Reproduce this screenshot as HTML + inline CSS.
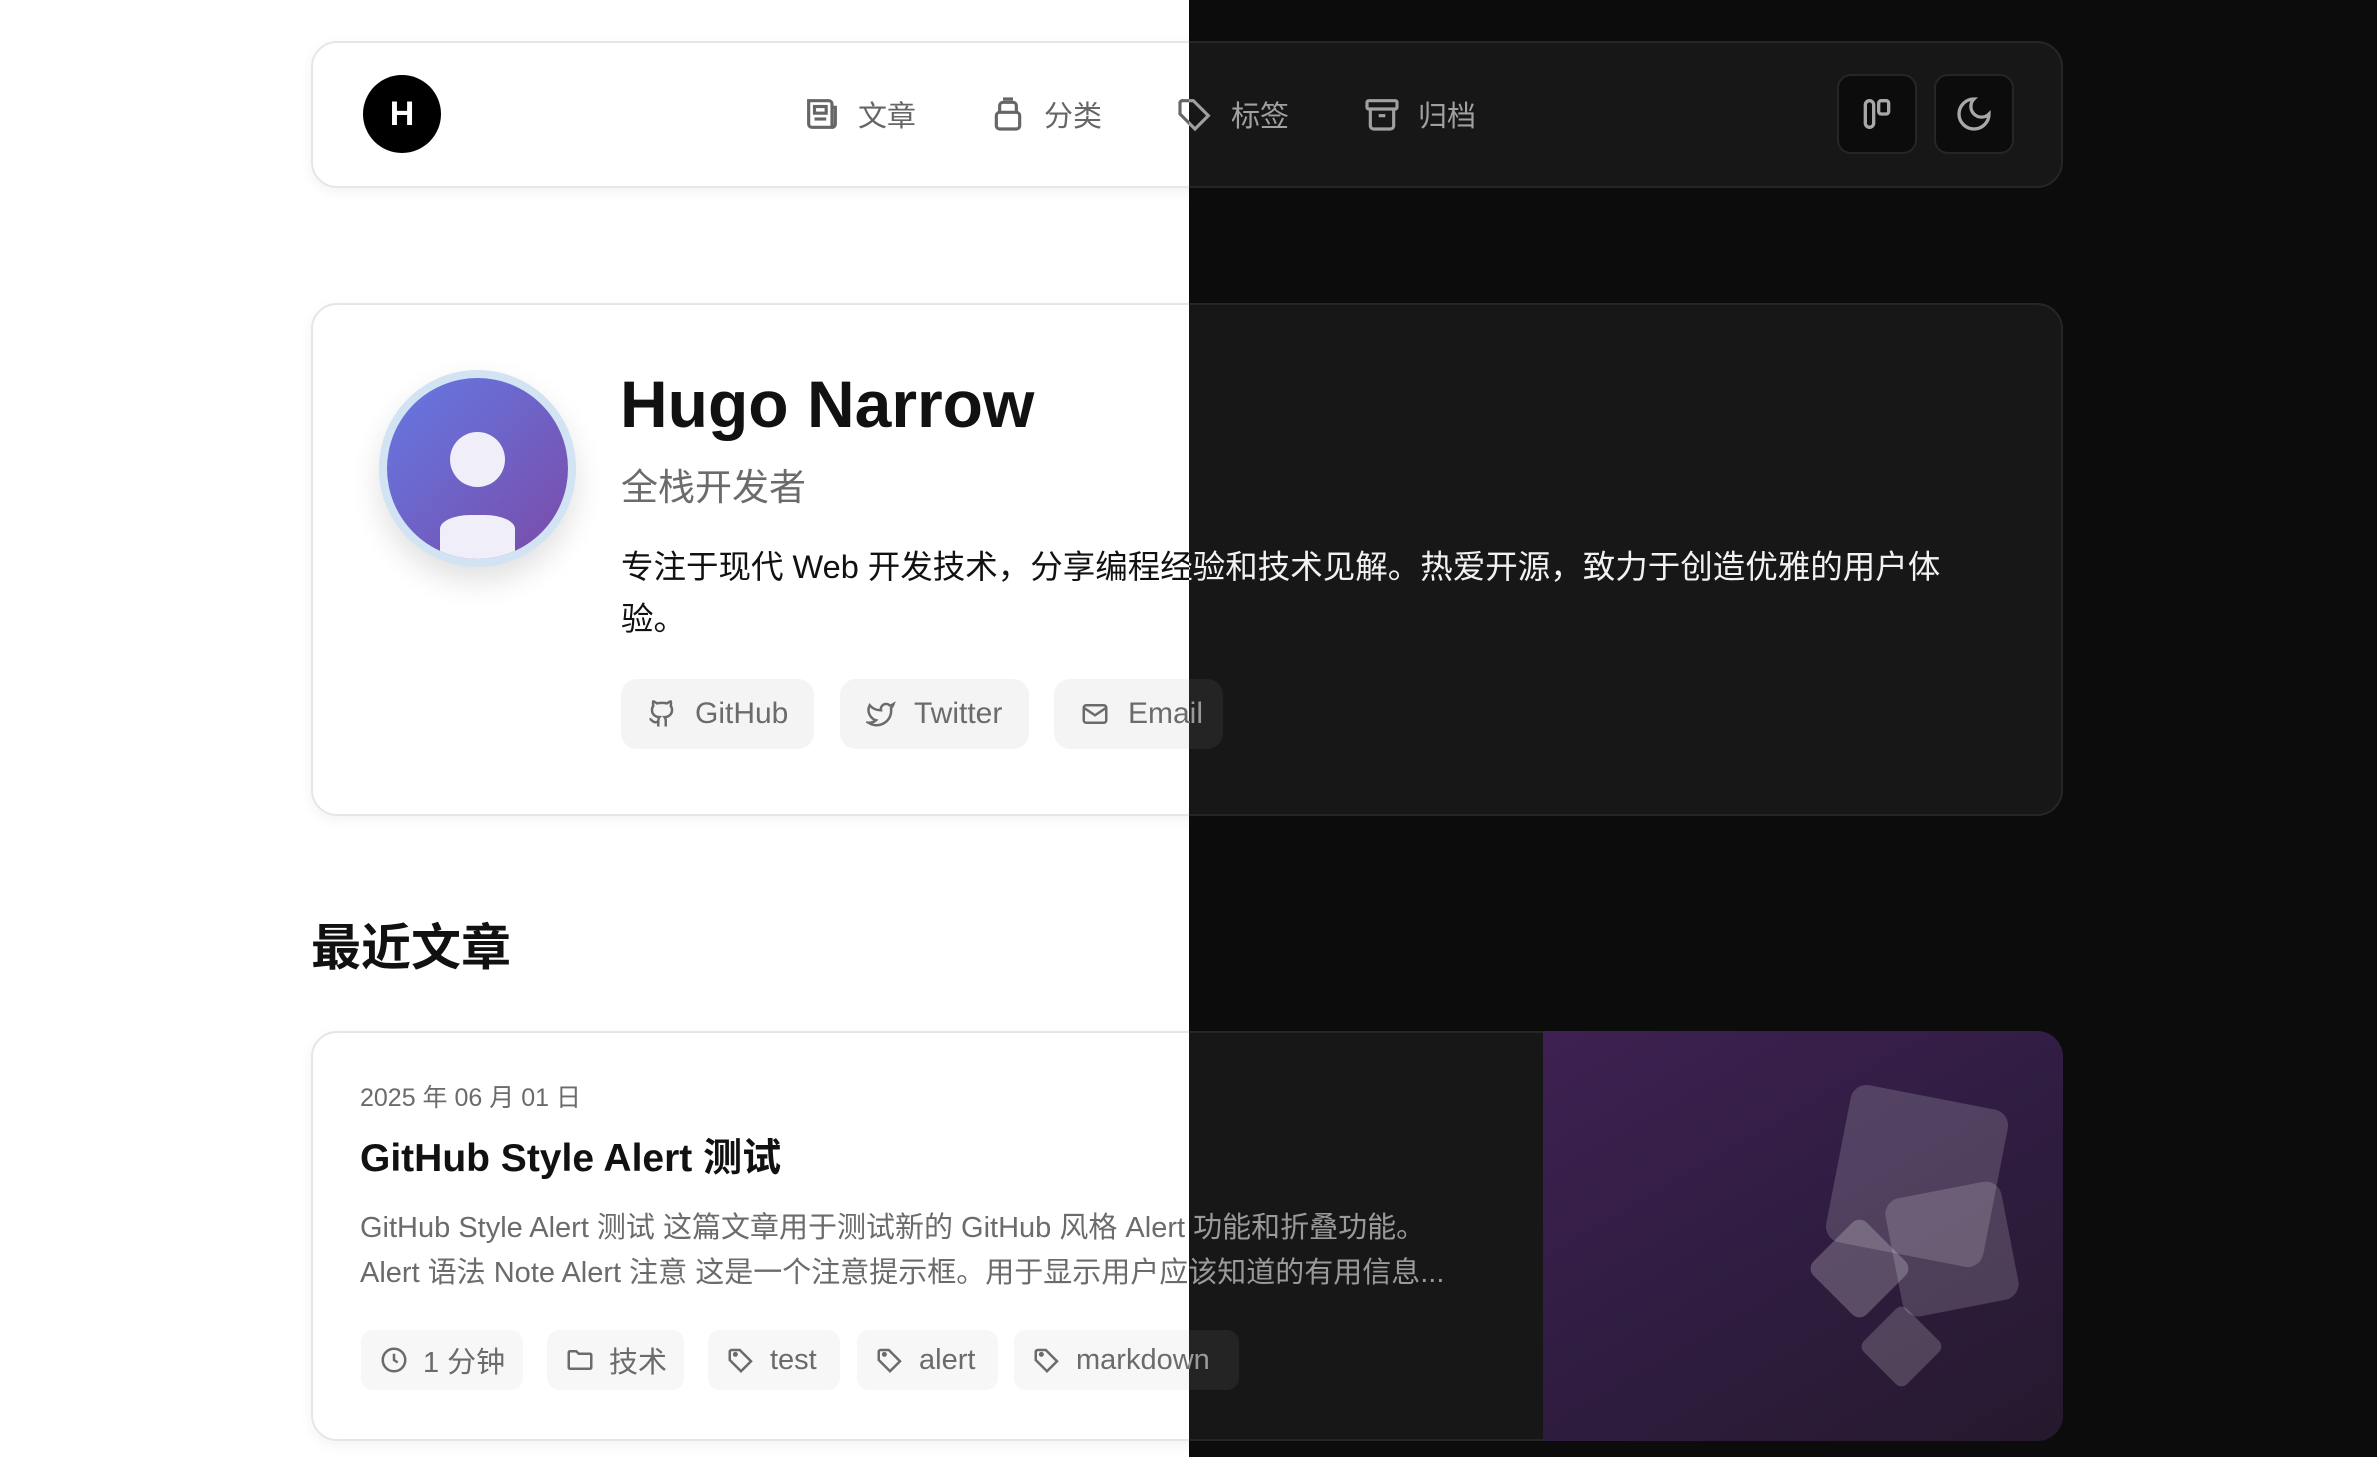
<!DOCTYPE html>
<html><head><meta charset="utf-8"><style>
*{margin:0;padding:0;box-sizing:border-box}
html,body{width:2377px;height:1457px;overflow:hidden;background:#fff}
body{font-family:"Liberation Sans","Noto Sans CJK SC",sans-serif;position:relative}
.layer{position:absolute;left:0;top:0;width:2377px;height:1457px;
 --bg:#fff;--card:#fff;--bd:#e6e6e6;--tx:#111;--mut:#6b6b6b;--chip:#f4f4f4;--nav:#666;--btn:#fff;--btnbd:#e6e6e6;--ic:#555;background:var(--bg)}
.dark{clip-path:inset(0 0 0 1189px);--bg:#0c0c0c;--card:#171717;--bd:#262626;--tx:#f2f2f2;--mut:#9a9a9a;--chip:#242424;--nav:#a0a0a0;--btn:#0c0c0c;--btnbd:#262626;--ic:#a8a8a8}
.card{position:absolute;left:311px;width:1752px;background:var(--card);border:2px solid var(--bd);border-radius:26px;overflow:hidden}
.light .card{box-shadow:0 4px 14px rgba(0,0,0,.05)}
.nav{top:41px;height:147px}
.logo{position:absolute;left:363px;top:75px;width:78px;height:78px;border-radius:50%;background:#000;color:#fff;font-weight:bold;font-size:34px;text-align:center;line-height:78px}
.ni{position:absolute;top:94px;height:40px;display:flex;align-items:center;font-size:29px;color:var(--nav)}
.ni svg{width:40px;height:40px;margin-right:16px;stroke:var(--nav);fill:none;stroke-width:1.9}
.tb{position:absolute;top:74px;width:80px;height:80px;border-radius:14px;background:var(--btn);border:2px solid var(--btnbd);display:flex;align-items:center;justify-content:center}
.tb svg{width:40px;height:40px;stroke:var(--ic);fill:none;stroke-width:2}
.prof{top:303px;height:513px}
.av{position:absolute;left:379px;top:370px;width:197px;height:197px;border-radius:50%;background:#d2e3f3;box-shadow:0 14px 30px rgba(0,0,0,.12);overflow:hidden}
.av .in{position:absolute;left:8px;top:8px;width:181px;height:181px;border-radius:50%;background:linear-gradient(135deg,#6479e4,#7a4ba8);overflow:hidden}
.name{position:absolute;left:620px;top:364px;font-size:66px;font-weight:bold;color:var(--tx);line-height:80px}
.sub{position:absolute;left:621px;top:463px;font-size:37px;color:var(--mut);line-height:50px}
.bio{position:absolute;left:621px;top:541px;font-size:32.5px;color:var(--tx);line-height:52px;width:1420px}
.sb{position:absolute;top:679px;height:70px;border-radius:16px;background:var(--chip);display:flex;align-items:center;padding-left:26px;font-size:30px;color:var(--mut)}
.sb svg{width:30px;height:30px;stroke:var(--mut);fill:none;stroke-width:2;margin-right:18px}
.h2{position:absolute;left:311px;top:918px;font-size:50px;font-weight:bold;color:var(--tx);line-height:60px}
.post{top:1031px;height:410px}
.date{position:absolute;left:360px;top:1078px;font-size:25px;color:var(--mut)}
.pt{position:absolute;left:360px;top:1135px;font-size:39px;font-weight:bold;color:var(--tx);line-height:48px}
.ex{position:absolute;left:360px;top:1206px;font-size:29px;color:var(--mut);line-height:45px;width:1150px}
.tg{position:absolute;top:1330px;height:60px;border-radius:12px;background:var(--chip);display:flex;align-items:center;padding-left:18px;font-size:29px;color:var(--mut)}
.light .tg{background:#f7f7f7}
.tg svg{width:30px;height:30px;stroke:var(--mut);fill:none;stroke-width:2;margin-right:14px}
.img{position:absolute;left:1543px;top:1031px;width:520px;height:410px;border-radius:0 26px 26px 0;background:linear-gradient(150deg,#3e2152 0%,#311d43 45%,#25192d 100%);overflow:hidden}
.sh{position:absolute;background:rgba(255,255,255,.16);border-radius:16px}
</style></head><body>
<div class="layer light">
 <div class="card nav"></div>
 <div class="logo">H</div>
 <div class="ni" style="left:802px"><svg viewBox="0 0 24 24"><path d="M4 4h12a2 2 0 0 1 2 2v14H6a2 2 0 0 1-2-2z"/><path d="M18 8h2v10a2 2 0 0 1-2 2"/><rect x="7.5" y="7.5" width="7" height="4"/><path d="M7.5 15h7"/></svg>文章</div>
 <div class="ni" style="left:988px"><svg viewBox="0 0 24 24"><rect x="5" y="11" width="14" height="10" rx="2"/><path d="M7 11V7a2 2 0 0 1 2-2h6a2 2 0 0 1 2 2v4"/><path d="M9 3h6"/></svg>分类</div>
 <div class="ni" style="left:1175px"><svg viewBox="0 0 24 24"><path d="M3 5v7l9 9 8-8-9-9H5a2 2 0 0 0-2 1z"/></svg>标签</div>
 <div class="ni" style="left:1362px"><svg viewBox="0 0 24 24"><rect x="3" y="4" width="18" height="5" rx="1"/><path d="M5 9v10a2 2 0 0 0 2 2h10a2 2 0 0 0 2-2V9"/><path d="M10 13h4"/></svg>归档</div>
 <div class="tb" style="left:1837px"><svg viewBox="0 0 24 24"><rect x="5" y="4" width="5" height="16" rx="2.5"/><rect x="13" y="4" width="6" height="8" rx="1.5"/></svg></div>
 <div class="tb" style="left:1934px"><svg viewBox="0 0 24 24"><path d="M12 3a6 6 0 0 0 9 9 9 9 0 1 1-9-9z"/></svg></div>

 <div class="card prof"></div>
 <div class="av"><div class="in"><div style="position:absolute;left:63px;top:54px;width:55px;height:55px;border-radius:50%;background:#f0eef8"></div><div style="position:absolute;left:53px;top:137px;width:75px;height:60px;border-radius:30px 30px 0 0/14px 14px 0 0;background:#f0eef8"></div></div></div>
 <div class="name">Hugo Narrow</div>
 <div class="sub">全栈开发者</div>
 <div class="bio">专注于现代 Web 开发技术，分享编程经验和技术见解。热爱开源，致力于创造优雅的用户体<br>验。</div>
 <div class="sb" style="left:621px;width:193px"><svg viewBox="0 0 24 24"><path d="M15 22v-4a4.8 4.8 0 0 0-1-3.5c3 0 6-2 6-5.5.1-1.3-.3-2.5-1-3.5.3-1.2.3-2.4 0-3.5 0 0-1 0-3 1.5-2.6-.5-5.4-.5-8 0C6 2 5 2 5 2c-.3 1.1-.3 2.3 0 3.5-.7 1-1.1 2.2-1 3.5 0 3.5 3 5.5 6 5.5-.4.5-.7 1.1-.8 1.7-.2.6-.2 1.2-.2 1.8v4"/><path d="M9 18c-4.5 2-5-2-7-2"/></svg>GitHub</div>
 <div class="sb" style="left:840px;width:189px"><svg viewBox="0 0 24 24"><path d="M22 4s-.7 2.1-2 3.4c1.6 10-9.4 17.3-18 11.6 2.2.1 4.4-.6 6-2C3 15.5.5 9.6 3 5c2.2 2.6 5.6 4.1 9 4-.9-4.2 4-6.6 7-3.8 1.1 0 3-1.200 3-1.2z"/></svg>Twitter</div>
 <div class="sb" style="left:1054px;width:169px"><svg viewBox="0 0 24 24"><rect x="3" y="5" width="18" height="14" rx="2"/><path d="M3 7l9 6 9-6"/></svg>Email</div>

 <div class="h2">最近文章</div>
 <div class="card post"></div>
 <div class="date">2025 年 06 月 01 日</div>
 <div class="pt">GitHub Style Alert 测试</div>
 <div class="ex">GitHub Style Alert 测试 这篇文章用于测试新的 GitHub 风格 Alert 功能和折叠功能。<br>Alert 语法 Note Alert 注意 这是一个注意提示框。用于显示用户应该知道的有用信息...</div>
 <div class="tg" style="left:361px;width:162px"><svg viewBox="0 0 24 24"><circle cx="12" cy="12" r="9"/><path d="M12 7v5l3 2"/></svg>1 分钟</div>
 <div class="tg" style="left:547px;width:137px"><svg viewBox="0 0 24 24"><path d="M3 6a1 1 0 0 1 1-1h5l2 2h9a1 1 0 0 1 1 1v10a1 1 0 0 1-1 1H4a1 1 0 0 1-1-1z"/></svg>技术</div>
 <div class="tg" style="left:708px;width:132px"><svg viewBox="0 0 24 24"><path d="M3 5v7l9 9 8-8-9-9H5a2 2 0 0 0-2 1z"/><circle cx="7.5" cy="7.5" r="1"/></svg>test</div>
 <div class="tg" style="left:857px;width:141px"><svg viewBox="0 0 24 24"><path d="M3 5v7l9 9 8-8-9-9H5a2 2 0 0 0-2 1z"/><circle cx="7.5" cy="7.5" r="1"/></svg>alert</div>
 <div class="tg" style="left:1014px;width:225px"><svg viewBox="0 0 24 24"><path d="M3 5v7l9 9 8-8-9-9H5a2 2 0 0 0-2 1z"/><circle cx="7.5" cy="7.5" r="1"/></svg>markdown</div>
</div>

<div class="layer dark">
 <div class="card nav"></div>
 <div class="ni" style="left:1175px"><svg viewBox="0 0 24 24"><path d="M3 5v7l9 9 8-8-9-9H5a2 2 0 0 0-2 1z"/></svg>标签</div>
 <div class="ni" style="left:1362px"><svg viewBox="0 0 24 24"><rect x="3" y="4" width="18" height="5" rx="1"/><path d="M5 9v10a2 2 0 0 0 2 2h10a2 2 0 0 0 2-2V9"/><path d="M10 13h4"/></svg>归档</div>
 <div class="tb" style="left:1837px"><svg viewBox="0 0 24 24"><rect x="5" y="4" width="5" height="16" rx="2.5"/><rect x="13" y="4" width="6" height="8" rx="1.5"/></svg></div>
 <div class="tb" style="left:1934px"><svg viewBox="0 0 24 24"><path d="M12 3a6 6 0 0 0 9 9 9 9 0 1 1-9-9z"/></svg></div>
 <div class="card prof"></div>
 <div class="bio">专注于现代 Web 开发技术，分享编程经验和技术见解。热爱开源，致力于创造优雅的用户体<br>验。</div>
 <div class="sb" style="left:1054px;width:169px"><svg viewBox="0 0 24 24"><rect x="3" y="5" width="18" height="14" rx="2"/><path d="M3 7l9 6 9-6"/></svg>Email</div>
 <div class="card post"></div>
 <div class="ex">GitHub Style Alert 测试 这篇文章用于测试新的 GitHub 风格 Alert 功能和折叠功能。<br>Alert 语法 Note Alert 注意 这是一个注意提示框。用于显示用户应该知道的有用信息...</div>
 <div class="tg" style="left:1014px;width:225px"><svg viewBox="0 0 24 24"><path d="M3 5v7l9 9 8-8-9-9H5a2 2 0 0 0-2 1z"/><circle cx="7.5" cy="7.5" r="1"/></svg>markdown</div>
 <div class="img">
  <div class="sh" style="left:294px;top:65px;width:160px;height:160px;transform:rotate(11deg)"></div>
  <div class="sh" style="left:350px;top:158px;width:118px;height:120px;transform:rotate(-11deg)"></div>
  <div class="sh" style="left:279px;top:200px;width:75px;height:75px;transform:rotate(45deg);border-radius:10px;background:rgba(255,255,255,.22)"></div>
  <div class="sh" style="left:328px;top:285px;width:61px;height:61px;transform:rotate(45deg);border-radius:8px;background:rgba(255,255,255,.18)"></div>
 </div>
</div>
</body></html>
